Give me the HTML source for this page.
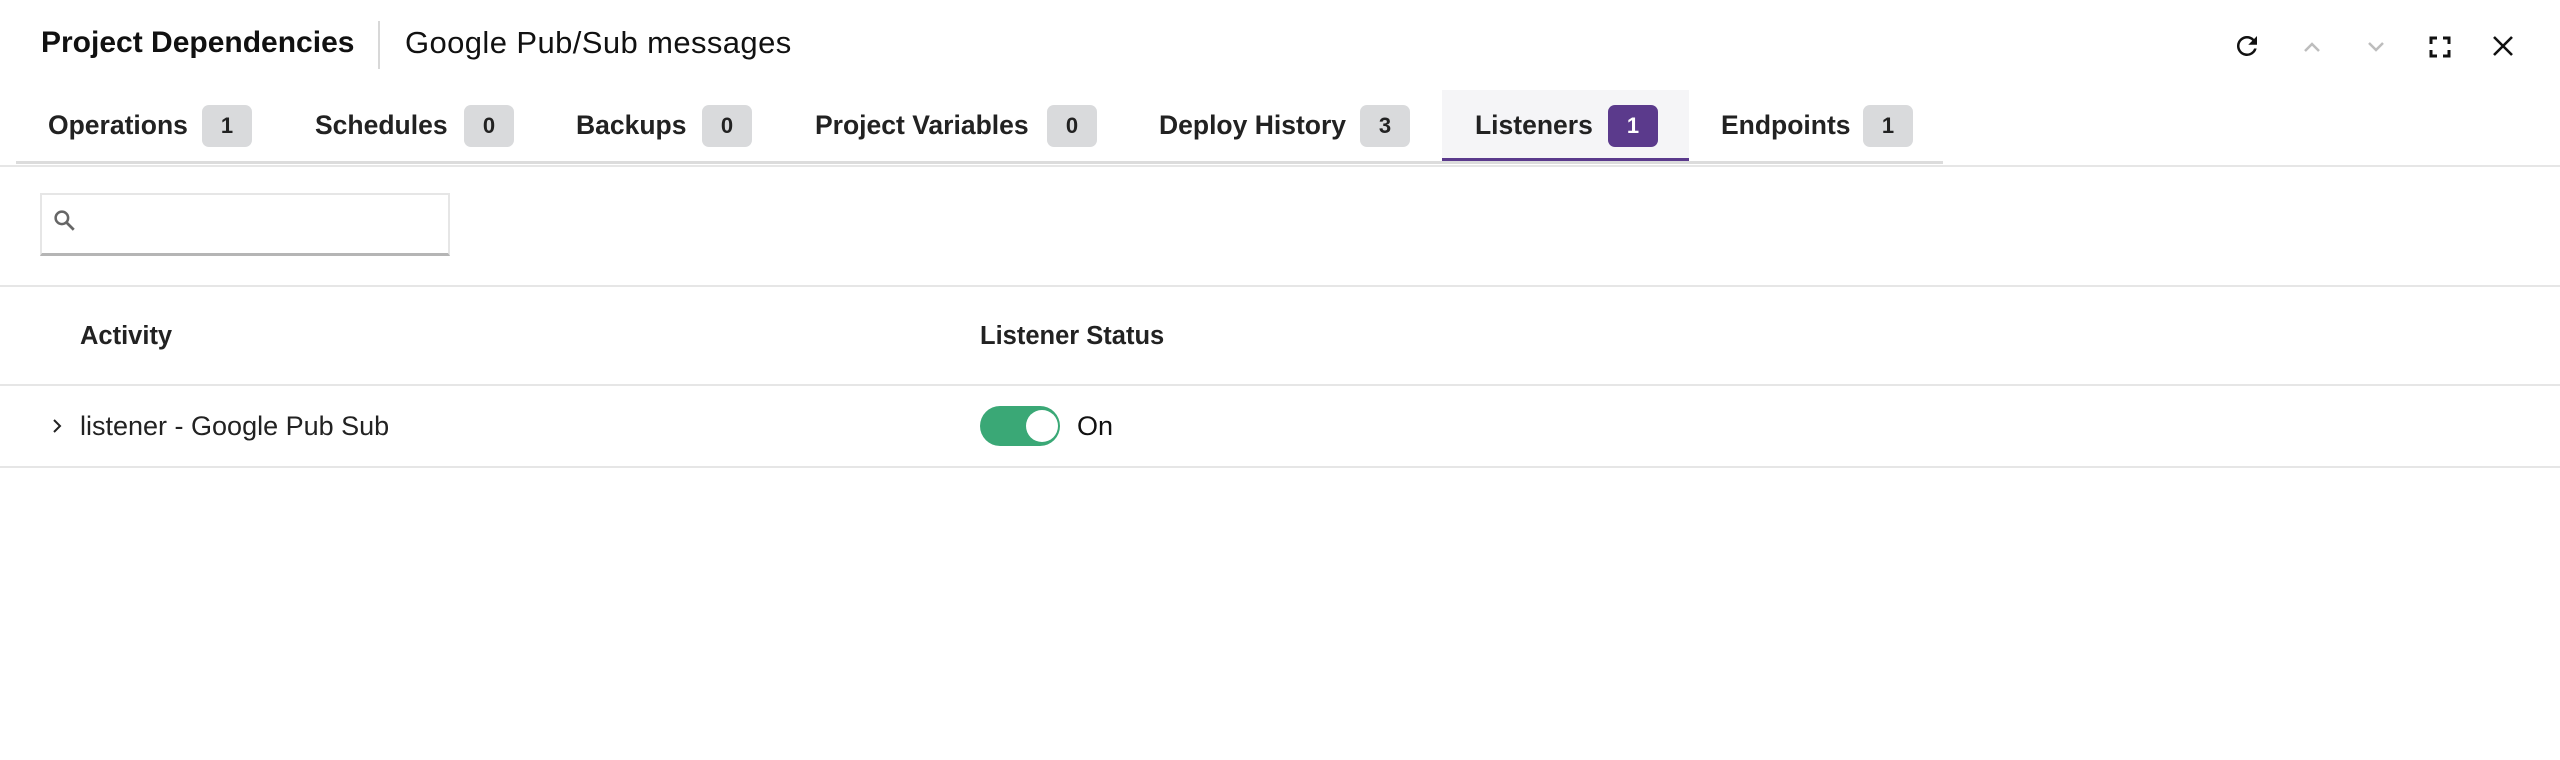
<!DOCTYPE html>
<html><head><meta charset="utf-8"><style>
*{margin:0;padding:0;box-sizing:border-box}
body{width:2560px;height:760px;background:#fff;font-family:"Liberation Sans",Arial,sans-serif;color:#1f1f1f;position:relative;overflow:hidden}
.a{position:absolute;white-space:nowrap}
.t{font-weight:bold;font-size:26.5px;top:110px;line-height:30px;color:#222}
.b{position:absolute;top:105px;width:50px;height:42px;border-radius:7px;background:#d9dadc;font-weight:bold;font-size:22px;line-height:42px;text-align:center;color:#222}
.line{position:absolute;height:2px;background:#e6e6e6}
</style></head><body>
<div class="a" style="left:41px;top:27px;font-size:30px;font-weight:bold;line-height:32px;color:#111">Project Dependencies</div>
<div class="a" style="left:378px;top:21px;width:2px;height:48px;background:#d8d8d8"></div>
<div class="a" style="left:405px;top:27px;font-size:31px;letter-spacing:0.4px;line-height:32px;color:#111">Google Pub/Sub messages</div>

<svg class="a" style="left:2232px;top:31px" width="30" height="30" viewBox="0 0 24 24"><path d="M17.65 6.35A7.96 7.96 0 0 0 12 4a8 8 0 1 0 7.73 10h-2.08A6 6 0 1 1 12 6c1.66 0 3.14.69 4.22 1.78L13 11h7V4l-2.35 2.35z" fill="#111"/></svg>
<svg class="a" style="left:2300px;top:36px" width="24" height="24" viewBox="0 0 24 24"><path d="M5 15l7-7 7 7" stroke="#bdbdbd" stroke-width="2.5" fill="none"/></svg>
<svg class="a" style="left:2364px;top:34px" width="24" height="24" viewBox="0 0 24 24"><path d="M5 9l7 7 7-7" stroke="#bdbdbd" stroke-width="2.5" fill="none"/></svg>
<svg class="a" style="left:2428px;top:35px" width="24" height="24" viewBox="0 0 24 24"><path d="M3 9V3h6M15 3h6v6M21 15v6h-6M9 21H3v-6" stroke="#111" stroke-width="3" fill="none"/></svg>
<svg class="a" style="left:2491px;top:34px" width="24" height="24" viewBox="0 0 24 24"><path d="M3 3l18 18M21 3L3 21" stroke="#111" stroke-width="2.6" fill="none"/></svg>

<div class="a" style="left:1442px;top:90px;width:247px;height:70px;background:#f5f5f7"></div>
<div class="line" style="left:16px;top:161px;width:1927px;height:3px;background:#dcdcdc"></div>
<div class="line" style="left:0;top:165px;width:2560px"></div>
<div class="a" style="left:1442px;top:158px;width:247px;height:3px;background:#5b3a8c"></div>

<div class="a t" style="left:48px">Operations</div><div class="b" style="left:202px">1</div>
<div class="a t" style="left:315px">Schedules</div><div class="b" style="left:464px">0</div>
<div class="a t" style="left:576px">Backups</div><div class="b" style="left:702px">0</div>
<div class="a t" style="left:815px">Project Variables</div><div class="b" style="left:1047px">0</div>
<div class="a t" style="left:1159px">Deploy History</div><div class="b" style="left:1360px">3</div>
<div class="a t" style="left:1475px">Listeners</div><div class="b" style="left:1608px;background:#5b3a8c;color:#fff">1</div>
<div class="a t" style="left:1721px">Endpoints</div><div class="b" style="left:1863px">1</div>

<div class="a" style="left:40px;top:193px;width:410px;height:63px;border:2px solid #e6e6e6;border-bottom:3px solid #b5b5b5"></div>
<svg class="a" style="left:50px;top:206px" width="30" height="30" viewBox="0 0 24 24"><circle cx="9.5" cy="9.5" r="5" stroke="#666" stroke-width="2" fill="none"/><path d="M13 13l6 6" stroke="#666" stroke-width="2.2"/></svg>

<div class="line" style="left:0;top:285px;width:2560px"></div>
<div class="a" style="left:80px;top:321px;font-size:25.5px;font-weight:bold;line-height:30px;color:#222">Activity</div>
<div class="a" style="left:980px;top:321px;font-size:25.5px;font-weight:bold;line-height:30px;color:#222">Listener Status</div>
<div class="line" style="left:0;top:384px;width:2560px"></div>
<svg class="a" style="left:50px;top:416px" width="14" height="20" viewBox="0 0 14 20"><path d="M4 4l6 6-6 6" stroke="#222" stroke-width="2" fill="none"/></svg>
<div class="a" style="left:80px;top:411px;font-size:27px;line-height:30px;color:#222">listener - Google Pub Sub</div>
<div class="a" style="left:980px;top:406px;width:80px;height:40px;border-radius:20px;background:#3aa876"></div>
<div class="a" style="left:1026px;top:410px;width:32px;height:32px;border-radius:50%;background:#fff"></div>
<div class="a" style="left:1077px;top:411px;font-size:27px;line-height:30px;color:#111">On</div>
<div class="line" style="left:0;top:466px;width:2560px"></div>
</body></html>
